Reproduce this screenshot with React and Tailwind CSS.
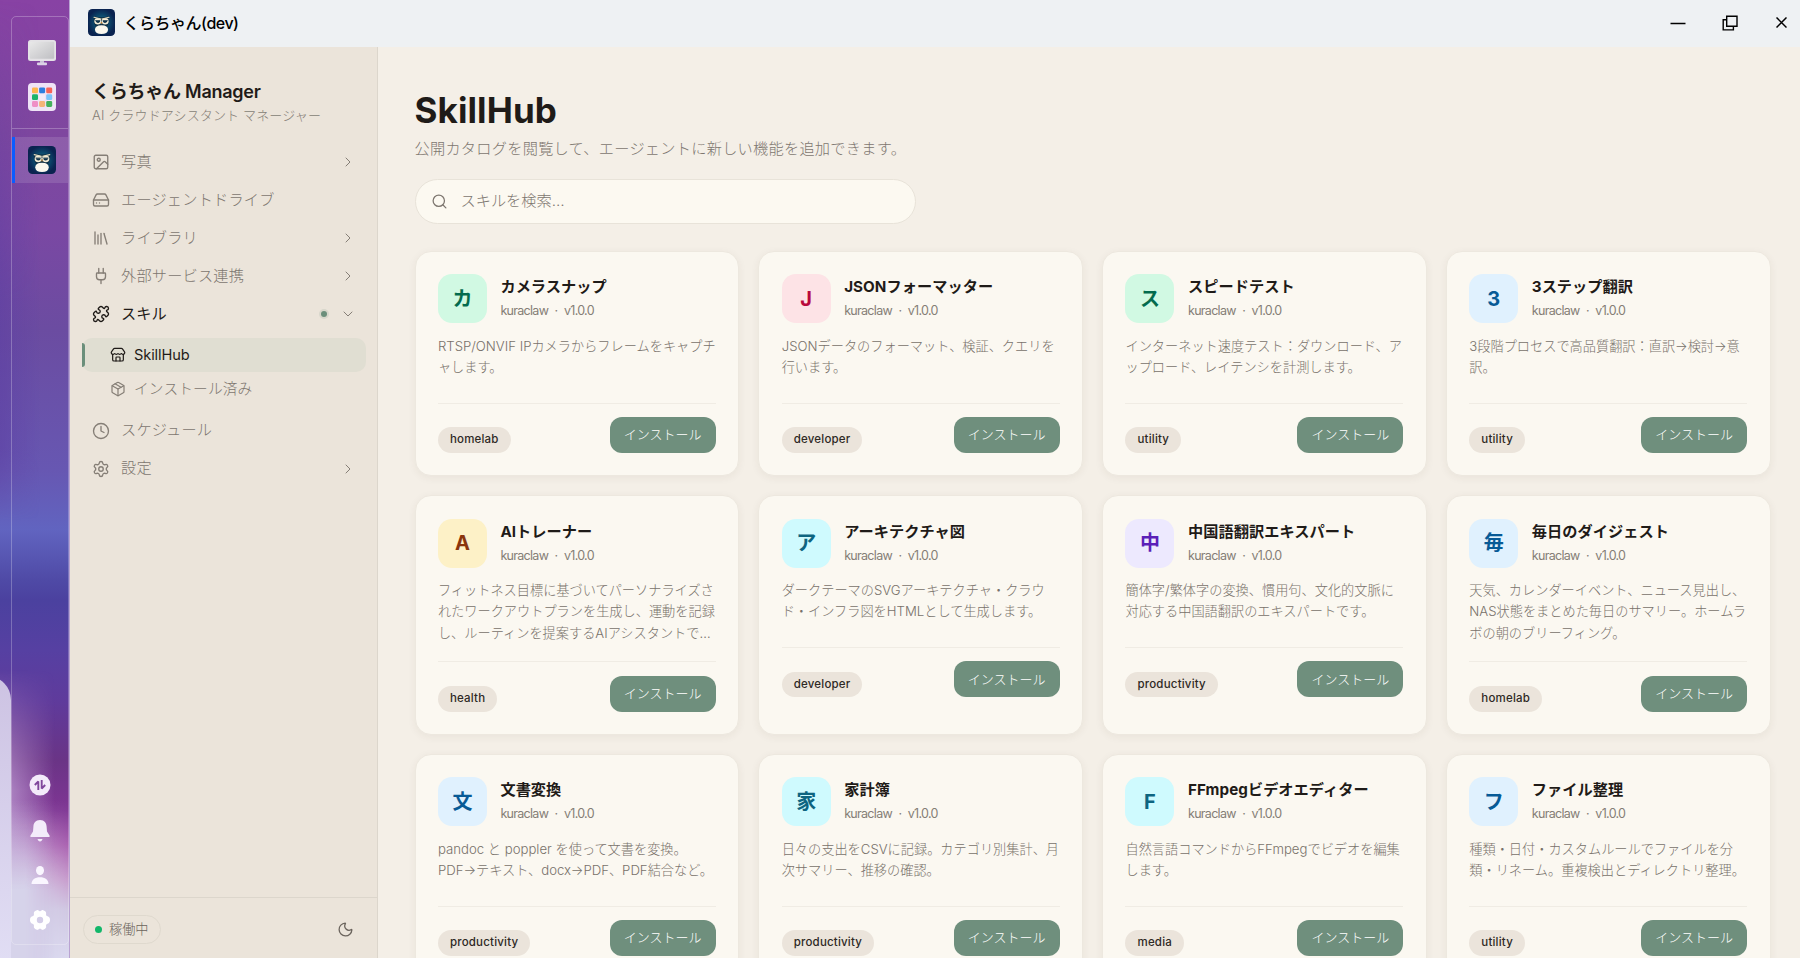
import {
  Image, HardDrive, Library, Plug, Puzzle, Store, Package, Clock, Settings,
  ChevronRight, ChevronDown, Moon, Search,
} from 'lucide-react';

const navItems = [
  { label: '写真', icon: Image, arrow: true },
  { label: 'エージェントドライブ', icon: HardDrive },
  { label: 'ライブラリ', icon: Library, arrow: true },
  { label: '外部サービス連携', icon: Plug, arrow: true },
];

const skills = [
  { letter: 'カ', name: 'カメラスナップ', desc: 'RTSP/ONVIF IPカメラからフレームをキャプチ\nャします。', tag: 'homelab', color: 'bg-[#d1f9e3] text-[#046b4e]' },
  { letter: 'J', name: 'JSONフォーマッター', desc: 'JSONデータのフォーマット、検証、クエリを\n行います。', tag: 'developer', color: 'bg-[#fde3e6] text-[#b80a3c]' },
  { letter: 'ス', name: 'スピードテスト', desc: 'インターネット速度テスト：ダウンロード、ア\nップロード、レイテンシを計測します。', tag: 'utility', color: 'bg-[#d1f9e3] text-[#046b4e]' },
  { letter: '3', name: '3ステップ翻訳', desc: '3段階プロセスで高品質翻訳：直訳→検討→意\n訳。', tag: 'utility', color: 'bg-[#e0f1fe] text-[#075a96]' },
  { letter: 'A', name: 'AIトレーナー', desc: 'フィットネス目標に基づいてパーソナライズさ\nれたワークアウトプランを生成し、運動を記録\nし、ルーティンを提案するAIアシスタントで…', tag: 'health', color: 'bg-[#fdf1c7] text-[#8a350c]' },
  { letter: 'ア', name: 'アーキテクチャ図', desc: 'ダークテーマのSVGアーキテクチャ・クラウ\nド・インフラ図をHTMLとして生成します。', tag: 'developer', color: 'bg-[#cffafe] text-[#0e6480]' },
  { letter: '中', name: '中国語翻訳エキスパート', desc: '簡体字/繁体字の変換、慣用句、文化的文脈に\n対応する中国語翻訳のエキスパートです。', tag: 'productivity', color: 'bg-[#ede9fe] text-[#5b1fb8]' },
  { letter: '毎', name: '毎日のダイジェスト', desc: '天気、カレンダーイベント、ニュース見出し、\nNAS状態をまとめた毎日のサマリー。ホームラ\nボの朝のブリーフィング。', tag: 'homelab', color: 'bg-[#e0f1fe] text-[#075a96]' },
  { letter: '文', name: '文書変換', desc: 'pandoc と poppler を使って文書を変換。\nPDF→テキスト、docx→PDF、PDF結合など。', tag: 'productivity', color: 'bg-[#e0f1fe] text-[#075a96]' },
  { letter: '家', name: '家計簿', desc: '日々の支出をCSVに記録。カテゴリ別集計、月\n次サマリー、推移の確認。', tag: 'productivity', color: 'bg-[#cffafe] text-[#0e6480]' },
  { letter: 'F', name: 'FFmpegビデオエディター', desc: '自然言語コマンドからFFmpegでビデオを編集\nします。', tag: 'media', color: 'bg-[#cffafe] text-[#0e6480]' },
  { letter: 'フ', name: 'ファイル整理', desc: '種類・日付・カスタムルールでファイルを分\n類・リネーム。重複検出とディレクトリ整理。', tag: 'utility', color: 'bg-[#e0f1fe] text-[#075a96]' },
];

function OwlLogo({ className }) {
  return (
    <svg viewBox="0 0 28 28" className={className}>
      <defs>
        <radialGradient id="owlBg">
          <stop offset="0" stopColor="#17708a" />
          <stop offset="0.6" stopColor="#0c4468" />
          <stop offset="1" stopColor="#0a2350" />
        </radialGradient>
      </defs>
      <rect width="28" height="28" rx="4.500" fill="url(#owlBg)" />
      <path d="M6 7.500 Q10 8.500 14 8.500 Q18 8.500 22 7.500 Q23 14 20 18 Q22 25 14 25 Q6 25 8 18 Q5 14 6 7.500Z" fill="#0d2f45" />
      <ellipse cx="10.200" cy="12.800" rx="3.600" ry="3.400" fill="#f3ecd6" />
      <ellipse cx="17.800" cy="12.800" rx="3.600" ry="3.400" fill="#f3ecd6" />
      <path d="M8 12.300h4.600c0 1.400-.9 2.200-2.200 2.200S8 13.700 8 12.300ZM15.400 12.300H20c0 1.400-1.100 2.200-2.400 2.200s-2.200-.8-2.200-2.200Z" fill="#10334a" />
      <path d="M6.200 8.600 13.400 10.300M21.800 8.600 14.600 10.300" stroke="#e3dcc0" strokeWidth="1.100" strokeLinecap="round" />
      <path d="M7.500 12h5.200M15.300 12h5.200" stroke="#10334a" strokeWidth=".8" />
      <path d="M13.100 13.500h1.800L14 16.200z" fill="#c98a3c" />
      <path d="M7.200 21.500 Q7.200 16.800 14 16.800 Q20.800 16.800 20.800 21.500 Q20.300 26 14 26 Q7.700 26 7.200 21.500Z" fill="#fbf8ee" />
    </svg>
  );
}

function MonitorIcon() {
  return (
    <svg viewBox="0 0 28 26" className="h-[26px] w-7">
      <defs>
        <linearGradient id="screen" x1="0" y1="0" x2="1" y2="1">
          <stop offset="0" stopColor="#e9e9e9" />
          <stop offset="1" stopColor="#bfbfc3" />
        </linearGradient>
      </defs>
      <path d="M12 20h4v3h-4z" fill="#c9bfd6" />
      <rect x="9" y="22.6" width="10" height="2.6" rx="1" fill="#dcd3e6" />
      <rect width="28" height="21" rx="2.5" fill="#e4e2e6" />
      <rect x="1.8" y="1.8" width="24.4" height="17" rx="1" fill="url(#screen)" />
    </svg>
  );
}

const tileColors = ['#fdb64c', '#2d7fe0', '#f76458', '#1db46a', '#f4ecf9', '#7cc4fb', '#ef8fc6', '#f5b478', '#45b05c'];

function AppsIcon() {
  return (
    <svg viewBox="0 0 28 28" className="size-7">
      <rect width="28" height="28" rx="4" fill="#efe3f6" />
      {tileColors.map((c, i) => (
        <rect key={i} x={4 + (i % 3) * 7.1} y={4.5 + Math.floor(i / 3) * 6.8} width="6" height="5.8" rx="1.3" fill={c} />
      ))}
    </svg>
  );
}

function Dock() {
  return (
    <aside className="relative flex h-[958px] w-[70px] shrink-0 overflow-hidden border-r border-[#b9a3d2] bg-[linear-gradient(180deg,#8842a4_0,#7f479f_130px,#7a48a3_230px,#6b4ca1_330px,#6757b2_470px,#6164c0_530px,#4f4aa6_580px,#4b419f_600px,#5640a2_650px,#5f3b9c_700px,#6a3486_760px,#7f3694_810px,#a452a9_845px,#c48cc4_880px,#cfc4e0_910px,#dddcf2_958px)] pt-4 pl-[11px]">
      {/* wallpaper highlights */}
      <div className="absolute inset-0 bg-[linear-gradient(90deg,#5c3ea388_0,#5c3ea300_40px)] [mask-image:linear-gradient(180deg,transparent_0,black_300px,black_450px,transparent_520px)]" />
      <div className="absolute inset-0 bg-[linear-gradient(90deg,#b793cc_0,#b793cc00_55px)] [mask-image:linear-gradient(180deg,transparent_670px,black_790px)]" />
      <div className="absolute inset-0 bg-[linear-gradient(180deg,#d2cce700_800px,#d6d3ea_890px)] [mask-image:linear-gradient(90deg,black_25px,transparent_85px)]" />
      <div className="absolute top-[676px] -left-6 h-[300px] w-[35px] rounded-tr-[24px] bg-linear-to-b from-[#cdc3e3] to-[#e2dff5]" />
      <div className="relative flex h-[929px] w-[58px] flex-col rounded-[5px] border border-white/25">
        <div className="flex h-[112px] flex-col items-center gap-[17px] border-b border-white/25 pt-[23px] pl-[3px]">
          <MonitorIcon />
          <AppsIcon />
        </div>
        <div className="mt-2 flex h-[46px] items-center justify-center border-l-[3px] border-[#0b5cff] bg-white/12">
          <OwlLogo className="size-7" />
        </div>
        <div className="mt-auto mb-[13px] flex flex-col items-center text-[#f3ebfa]">
          <svg viewBox="0 0 22 22" className="size-[22px]">
            <circle cx="11" cy="11" r="10.5" fill="currentColor" />
            <path d="M5.800 11 9.300 7.500V16M12.700 6v8.500l3.500-3.500" fill="none" stroke="#80489c" strokeWidth="1.9" strokeLinejoin="bevel" />
          </svg>
          <svg viewBox="0 0 20 22" className="mt-6 h-[22px] w-5" fill="currentColor">
            <path d="M10 0C5.500 0 3.600 3 3.400 6.500L3 11.500.5 15.500c-.5 1 0 1.500 1 1.500h17c1 0 1.500-.5 1-1.500L17 11.500l-.4-5C16.400 3 14.500 0 10 0Z" />
            <path d="M7.500 19h5c-.3 1.600-1.300 2.500-2.500 2.500S7.800 20.600 7.500 19Z" />
          </svg>
          <svg viewBox="0 0 18 18" className="mt-[24px] size-[18px] text-[#faf6ff]" fill="currentColor">
            <ellipse cx="9" cy="4.600" rx="4" ry="4.600" />
            <path d="M.5 18C.5 14 4 11.300 9 11.300S17.500 14 17.500 18Z" />
          </svg>
          <svg viewBox="0 0 22 22" className="mt-[25px] size-[22px] text-white" fill="currentColor">
            <path
              fillRule="evenodd"
              d="M7.800 1.200c1.600-.6 2.400 1.200 3.200 1.200s1.600-1.800 3.200-1.200c2.600 1 3.200 2 2.900 3.700-.2 1.200.3 2 1.500 2.400 1.600.6 2.400 1.700 2.400 3.700s-.8 3.100-2.400 3.700c-1.200.4-1.700 1.200-1.500 2.400.3 1.700-.3 2.700-2.900 3.700-1.600.6-2.400-1.200-3.200-1.200s-1.600 1.800-3.200 1.200c-2.600-1-3.200-2-2.900-3.700.2-1.200-.3-2-1.500-2.400C1.800 14.100 1 13 1 11s.8-3.100 2.400-3.700c1.200-.4 1.700-1.200 1.500-2.400C4.600 3.200 5.200 2.200 7.800 1.200ZM11 7.800a3.200 3.200 0 1 0 0 6.400 3.200 3.200 0 0 0 0-6.400Z"
            />
          </svg>
        </div>
      </div>
    </aside>
  );
}

function TitleBar() {
  return (
    <header className="flex h-[47px] shrink-0 items-center bg-[#eef1f3] pr-[13px] pb-[2px] pl-[17.500px] text-black">
      <OwlLogo className="size-[27px]" />
      <span className="ml-[9px] text-[16px] font-medium tracking-[-0.5px]">くらちゃん(dev)</span>
      <div className="ml-auto flex items-center">
        <svg viewBox="0 0 16 16" className="size-4" stroke="currentColor" strokeWidth="1.500"><path d="M.5 8.500h15" /></svg>
        <svg viewBox="0 0 16 16" className="ml-9 size-4" fill="none" stroke="currentColor" strokeWidth="1.400">
          <path d="M4.700 1.200h10.300v10H4.700z" />
          <path d="M4.700 4.700H1.200v10.200h10.200v-3.700" />
        </svg>
        <svg viewBox="0 0 11 11" className="ml-[38px] size-[11px]" stroke="currentColor" strokeWidth="1.500"><path d="m.5.5 10 10M10.500.5l-10 10" /></svg>
      </div>
    </header>
  );
}

function NavRow({ item }) {
  const Icon = item.icon;
  return (
    <a className="flex h-[38.100px] items-center pr-[10px] pl-[10px] text-[#857e76]">
      <Icon size={18} strokeWidth={1.8} />
      <span className="ml-[11px] text-[15.200px] font-light tracking-[0.2px] text-[#7d766f]">{item.label}</span>
      {item.arrow && <ChevronRight size={16} strokeWidth={1.5} className="ml-auto" />}
    </a>
  );
}

function Sidebar() {
  return (
    <nav className="flex w-[308px] shrink-0 flex-col border-r border-[#dcd6cc] bg-[#ebe4da]">
      <div className="px-[22px] pt-[31px]">
        <h1 className="text-[18px] leading-[28px] font-semibold tracking-[-0.25px] text-[#1f1b18]">くらちゃん Manager</h1>
        <p className="text-[13px] leading-[19px] font-light tracking-[0.15px] text-[#857e76]">AI クラウドアシスタント マネージャー</p>
      </div>
      <div className="mt-[18px] flex flex-col pr-[11px] pl-3">
        {navItems.map((item) => <NavRow key={item.label} item={item} />)}
        <a className="flex h-[38.100px] items-center pr-[10px] pl-[10px] text-[#1f1b18]">
          <Puzzle size={18} strokeWidth={1.8} />
          <span className="ml-[11px] text-[15.200px]">スキル</span>
          <span className="mr-[13px] ml-auto size-[6px] rounded-full bg-[#6b8f7b] ring-2 ring-[#6b8f7b]/15" />
          <ChevronDown size={16} strokeWidth={1.5} className="text-[#857e76]" />
        </a>
        <div className="mt-[5px] mb-[6px] flex flex-col">
          <a className="flex h-[34px] items-center rounded-[10px] bg-[#e0ded2] text-[#1f1b18]">
            <span className="h-6 w-[3px] rounded-r-sm bg-[#6b8f7b]" />
            <Store size={16} strokeWidth={1.8} className="ml-[25px]" />
            <span className="ml-[8px] text-[14.600px] tracking-[-0.1px]">SkillHub</span>
          </a>
          <a className="flex h-[33px] items-center pl-7 text-[#857e76]">
            <Package size={16} strokeWidth={1.8} />
            <span className="ml-[8px] text-[14.700px] font-light tracking-[0.15px] text-[#7d766f]">インストール済み</span>
          </a>
        </div>
        <NavRow item={{ label: 'スケジュール', icon: Clock }} />
        <NavRow item={{ label: '設定', icon: Settings, arrow: true }} />
      </div>
      <div className="mt-auto flex h-[61px] items-center justify-between border-t border-[#dcd6cc] pr-[23px] pl-[13px] text-[#6b645d]">
        <div className="mt-[3px] flex h-[29px] items-center gap-[7px] rounded-full border border-[#dfd9ce] pr-[11px] pl-[11px]">
          <span className="size-[7px] rounded-full bg-[#12b76a]" />
          <span className="text-[13.200px] font-light">稼働中</span>
        </div>
        <Moon size={17} strokeWidth={1.8} className="mt-[3px]" />
      </div>
    </nav>
  );
}

function SkillCard({ skill }) {
  return (
    <article className="rounded-[16px] border border-[#ede8df] bg-[#fbf8f1] p-[22.400px] shadow-[0_2px_8px_rgba(60,45,30,0.06)]">
      <div className="flex h-[49px] items-center gap-[13.500px]">
        <div className={`flex size-[49px] shrink-0 items-center justify-center rounded-[14px] text-[20px] font-bold ${skill.color}`}>
          {skill.letter}
        </div>
        <div className="-mt-[1px]">
          <h3 className="text-[15.200px] leading-[24px] font-bold tracking-[0.05px] whitespace-nowrap text-[#1f1b18]">{skill.name}</h3>
          <p className="mt-[2px] text-[12.500px] leading-[20px] tracking-[-0.7px] whitespace-pre text-[#857e76] [word-spacing:0.4px]">kuraclaw  ·  v1.0.0</p>
        </div>
      </div>
      <p className="mt-[12.600px] min-h-[49px] text-[13.200px] leading-[21.100px] font-light whitespace-pre text-[#78716a]">{skill.desc}</p>
      <div className="mt-[17.600px] flex items-end justify-between border-t border-[#f0ece4] pt-[13.400px]">
        <span className="rounded-full bg-[#ebe4db] px-3 text-[11.500px] leading-[25.600px] font-medium tracking-[0.2px] text-[#2e2925]">{skill.tag}</span>
        <button className="h-9 w-[106px] rounded-[12px] bg-[#6f8f7d] text-[13px] font-light text-white">インストール</button>
      </div>
    </article>
  );
}

export default function App() {
  return (
    <div className="flex h-[958px] w-[1800px] overflow-hidden font-['Inter','Noto_Sans_CJK_JP',sans-serif]">
      <Dock />
      <div className="flex min-w-0 flex-1 flex-col">
        <TitleBar />
        <div className="flex min-h-0 flex-1">
          <Sidebar />
          <main className="min-w-0 flex-1 overflow-hidden bg-[#f4efe7] pt-[40px] pr-[29.500px] pl-[36.500px]">
            <h2 className="text-[35px] leading-[47px] font-bold tracking-[0.1px] text-[#1f1b18]">SkillHub</h2>
            <p className="mt-[3px] text-[15.200px] leading-[24px] font-light tracking-[0.27px] text-[#7d766f]">
              公開カタログを閲覧して、エージェントに新しい機能を追加できます。
            </p>
            <div className="mt-[18px] flex h-[45px] w-[501px] items-center rounded-full border border-[#e8e3d9] bg-[#fcf9f1] pl-[15px]">
              <Search size={17} strokeWidth={1.8} className="text-[#7d766f]" />
              <span className="ml-[13px] text-[15.200px] font-light text-[#7d766f]">スキルを検索…</span>
            </div>
            <div className="mt-[27px] grid grid-cols-4 gap-x-[19.200px] gap-y-[19px]">
              {skills.map((s) => <SkillCard key={s.name} skill={s} />)}
            </div>
          </main>
        </div>
      </div>
    </div>
  );
}
